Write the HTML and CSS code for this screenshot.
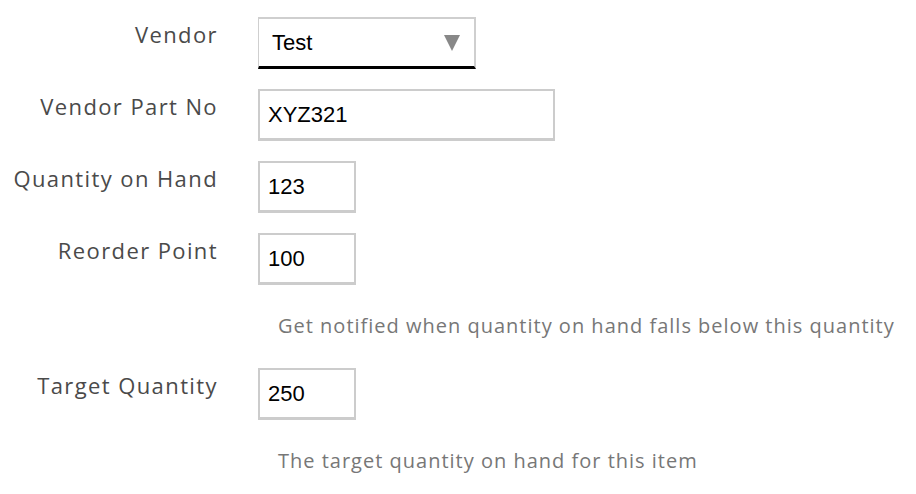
FILE: index.html
```html
<!DOCTYPE html>
<html>
<head>
<meta charset="utf-8">
<link rel="stylesheet" href="styles.css">
</head>
<body>
<form class="form">
  <div class="row">
    <div class="label">Vendor</div>
    <div class="select">
      <span class="select-value">Test</span>
      <span class="arrow"></span>
    </div>
  </div>
  <div class="row">
    <div class="label">Vendor Part No</div>
    <div class="input input-wide">XYZ321</div>
  </div>
  <div class="row">
    <div class="label">Quantity on Hand</div>
    <div class="input input-small">123</div>
  </div>
  <div class="row">
    <div class="label">Reorder Point</div>
    <div class="input input-small">100</div>
  </div>
  <div class="help">Get notified when quantity on hand falls below this quantity</div>
  <div class="row">
    <div class="label">Target Quantity</div>
    <div class="input input-small">250</div>
  </div>
  <div class="help">The target quantity on hand for this item</div>
</form>
</body>
</html>
```

FILE: styles.css
```css
html, body {
  margin: 0;
  padding: 0;
  background: #ffffff;
}

.form {
  display: flex;
  flex-direction: column;
  gap: 20px;
  padding-top: 17px;
}

.row {
  display: flex;
  align-items: flex-start;
  gap: 41px;
}

.label {
  width: 218px;
  flex: none;
  text-align: right;
  white-space: nowrap;
  font-family: "Open Sans", "Lato", sans-serif;
  font-size: 22px;
  line-height: 26px;
  letter-spacing: 1.4px;
  margin-right: -1px;
  color: #4a4a4a;
  padding-top: 4px;
}

.select {
  box-sizing: border-box;
  width: 218px;
  height: 52px;
  border-top: 2px solid #cfcfcf;
  border-left: 1px solid #cfcfcf;
  border-right: 2px solid #cfcfcf;
  border-bottom: 3px solid #000000;
  display: flex;
  align-items: center;
  justify-content: space-between;
  padding: 0 14px 0 13px;
  font-family: "Liberation Sans", Arial, sans-serif;
  font-size: 22px;
  color: #000;
}

.arrow {
  width: 0;
  height: 0;
  border-left: 8px solid transparent;
  border-right: 8px solid transparent;
  border-top: 16px solid #888888;
  margin-top: 1px;
}

.input {
  box-sizing: border-box;
  height: 52px;
  border-top: 2px solid #cccccc;
  border-left: 2px solid #cccccc;
  border-right: 2px solid #cccccc;
  border-bottom: 3px solid #cccccc;
  display: flex;
  align-items: center;
  padding: 0 8px;
  font-family: "Liberation Sans", Arial, sans-serif;
  font-size: 22px;
  color: #000;
}

.input-wide {
  width: 297px;
}

.input-small {
  width: 98px;
}

.help {
  padding-left: 278px;
  white-space: nowrap;
  font-family: "Open Sans", "Lato", sans-serif;
  font-size: 20px;
  line-height: 28px;
  letter-spacing: 1px;
  color: #777777;
  margin-top: 7px;
  margin-bottom: 8px;
}
```
